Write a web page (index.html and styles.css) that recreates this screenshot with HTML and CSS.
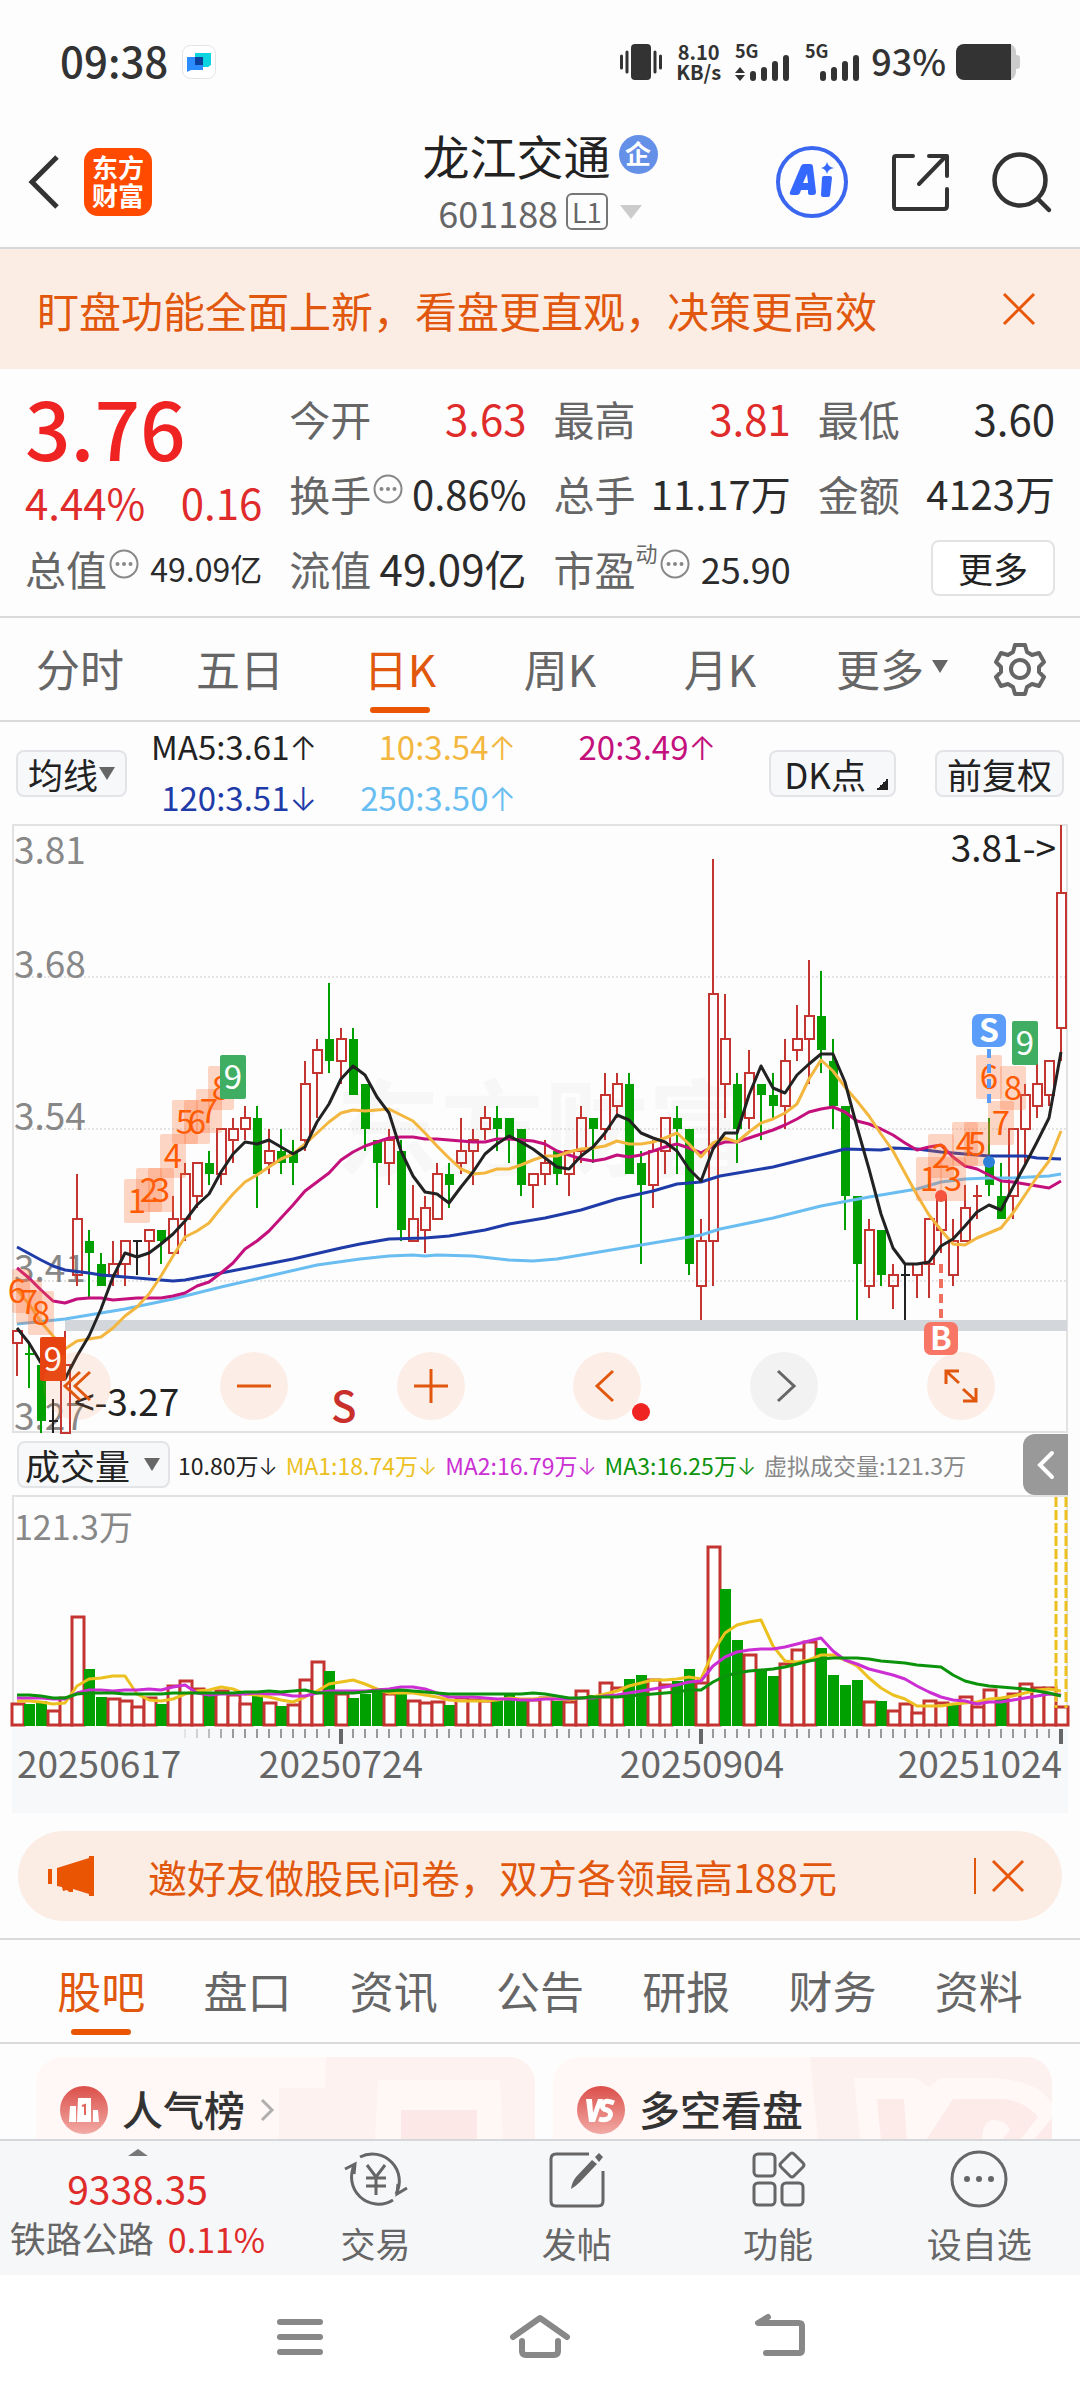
FILE: index.html
```html
<!DOCTYPE html>
<html lang="zh-CN">
<head>
<meta charset="utf-8">
<meta name="viewport" content="width=device-width, initial-scale=1">
<title>龙江交通 601188</title>
<link rel="stylesheet" href="styles.css">
</head>
<body>
<div class="status">
  <span class="status-time">09:38</span>
  <svg class="status-app" viewBox="0 0 34 34" width="34" height="34" aria-hidden="true"><rect x=".5" y=".5" width="33" height="33" rx="8" fill="#fff" stroke="#e2e4e8"/><path d="M13 8h16v12l-3 2H13z" fill="#0cd3e0"/><path d="M5 12h16v13H9l-4 2z" fill="#2a8cff"/><path d="M13 12h8v8h-8z" fill="#0a3f9c"/></svg>
  <span class="grow"></span>
  <svg viewBox="0 0 42 36" width="42" height="36" aria-hidden="true"><rect x="11" y="0" width="20" height="36" rx="4" fill="#333"/><path d="M1.500 12v12M7 8v20M35 8v20M40.500 12v12" stroke="#333" stroke-width="3" stroke-linecap="round"/></svg>
  <span class="status-speed"><span>8.10</span><span>KB/s</span></span>
  <svg viewBox="0 0 56 38" width="56" height="38" aria-hidden="true" class="signal"><text x="0" y="15">5G</text><path d="M5 24l5 6H0zM5 38l5-6H0z"/><rect x="15" y="28" width="6" height="10" rx="3"/><rect x="26" y="24" width="6" height="14" rx="3"/><rect x="37" y="18" width="6" height="20" rx="3"/><rect x="48" y="12" width="6" height="26" rx="3"/></svg>
  <svg viewBox="0 0 56 38" width="56" height="38" aria-hidden="true" class="signal"><text x="0" y="15">5G</text><rect x="15" y="28" width="6" height="10" rx="3"/><rect x="26" y="24" width="6" height="14" rx="3"/><rect x="37" y="18" width="6" height="20" rx="3"/><rect x="48" y="12" width="6" height="26" rx="3"/></svg>
  <span class="status-pct">93%</span>
  <svg viewBox="0 0 64 36" width="64" height="36" aria-hidden="true"><rect x="8" width="52" height="36" rx="8" fill="#ccc"/><rect x="58" y="11" width="6" height="14" rx="3" fill="#ccc"/><path d="M8 0h47v36H8a8 8 0 0 1-8-8V8a8 8 0 0 1 8-8z" fill="#333"/></svg>
</div>

<header class="header">
  <div class="header-left">
    <button class="plain" aria-label="返回"><svg viewBox="0 0 32 54" width="32" height="54"><path d="M29 2L4 27l25 25" fill="none" stroke="#333" stroke-width="5"/></svg></button>
    <a class="logo" href="#">东方<br>财富</a>
  </div>
  <div class="header-mid">
    <h1 class="name">龙江交通<span class="badge-corp">企</span></h1>
    <div class="code">601188<span class="level">L1</span><svg viewBox="0 0 22 14" width="22" height="14" aria-hidden="true"><path d="M0 0h22L11 14z" fill="#ccc"/></svg></div>
  </div>
  <div class="header-right">
    <button class="plain" aria-label="Ai"><svg viewBox="0 0 72 72" width="72" height="72"><circle cx="36" cy="36" r="34" fill="none" stroke="#3a66f0" stroke-width="4"/><path d="M25 20q1-2 3-2h6q3 0 3 3l3 25q0 3-3 3h-3q-2 0-2-2v-3h-7l-1 3q-1 2-3 2h-5q-3 0-2-3zM27 37h5l-1-9z" fill="#3568ff" fill-rule="evenodd"/><path d="M48 30h6q2 0 2 2l-2 17q0 2-2 2h-5q-2 0-2-2l1-17q0-2 2-2z" fill="#3568ff"/><path d="M51 16q1 5 7 6q-6 1-7 6q-1-5-6-6q5-1 6-6z" fill="#3568ff"/></svg></button>
    <button class="plain" aria-label="分享"><svg viewBox="0 0 58 58" width="58" height="58"><g fill="none" stroke="#333" stroke-width="4" stroke-linecap="round" stroke-linejoin="round"><path d="M22 3H5q-2 0-2 2v48q0 3 2 3h48q3 0 3-3V36"/><path d="M38 3h18v20M55 3L28 31"/></g></svg></button>
    <button class="plain" aria-label="搜索"><svg viewBox="0 0 60 60" width="60" height="60"><circle cx="28" cy="28" r="25.500" fill="none" stroke="#333" stroke-width="4.500"/><path d="M46 47l11 11" stroke="#333" stroke-width="4.500" stroke-linecap="round"/></svg></button>
  </div>
</header>

<div class="banner">
  <span>盯盘功能全面上新，看盘更直观，决策更高效</span>
  <button class="plain" aria-label="关闭"><svg viewBox="0 0 32 32" width="32" height="32"><path d="M1 1l30 30M31 1L1 31" stroke="#e8560a" stroke-width="3"/></svg></button>
</div>

<section class="quote">
  <div class="price"><strong>3.76</strong><span>4.44%</span><span>0.16</span></div>
  <div class="cell"><span>今开</span><b class="up">3.63</b></div>
  <div class="cell"><span>最高</span><b class="up">3.81</b></div>
  <div class="cell"><span>最低</span><b>3.60</b></div>
  <div class="cell"><span>换手</span><svg class="info" viewBox="0 0 30 30"><use href="#info"/></svg><b class="mid">0.86%</b></div>
  <div class="cell"><span>总手</span><b class="mid">11.17万</b></div>
  <div class="cell"><span>金额</span><b class="mid">4123万</b></div>
  <div class="cell"><span>总值</span><svg class="info" viewBox="0 0 30 30"><use href="#info"/></svg><b class="small">49.09亿</b></div>
  <div class="cell"><span>流值</span><b>49.09亿</b></div>
  <div class="cell"><span>市盈<sup>动</sup></span><svg class="info" viewBox="0 0 30 30"><use href="#info"/></svg><b class="pe">25.90</b></div>
  <div class="cell end"><button class="more">更多</button></div>
</section>
<svg class="defs" aria-hidden="true"><defs><g id="info"><circle cx="15" cy="15" r="13.500" fill="none" stroke="#888" stroke-width="2"/><g fill="#888"><circle cx="8.500" cy="15" r="2"/><circle cx="15" cy="15" r="2"/><circle cx="21.500" cy="15" r="2"/></g></g><linearGradient id="rose" x2="0" y2="1"><stop offset="0" stop-color="#db4f4a"/><stop offset="1" stop-color="#f2aaa5"/></linearGradient></defs></svg>

<nav class="periods">
  <button class="tab">分时</button>
  <button class="tab">五日</button>
  <button class="tab on">日K</button>
  <button class="tab">周K</button>
  <button class="tab">月K</button>
  <button class="tab"><span class="drop">更多</span></button>
  <button class="plain gear" aria-label="设置"><svg viewBox="0 0 54 54" width="54" height="54" fill="none" stroke="#666" stroke-width="4"><path d="M22 3h10l2 7 5 3 7-2 5 9-5 5v5l5 5-5 9-7-2-5 3-2 7H22l-2-7-5-3-7 2-5-9 5-5v-5l-5-5 5-9 7 2 5-3z" stroke-linejoin="round"/><circle cx="27" cy="27" r="9"/></svg></button>
</nav>

<div class="averages">
  <button class="chip">均线<i class="caret"></i></button>
  <div class="ma-list">
    <span class="ma5">MA5:3.61<i>↑</i></span><span class="ma10">10:3.54<i>↑</i></span><span class="ma20">20:3.49<i>↑</i></span>
    <span class="ma120">120:3.51<i>↓</i></span><span class="ma250">250:3.50<i>↑</i></span>
  </div>
  <button class="chip dk">DK点<i class="corner"></i></button>
  <button class="chip">前复权</button>
</div>

<section class="chart">
  <svg class="kline" viewBox="12 824 1056 610" role="img" aria-label="日K线图">
    <text class="watermark" x="336" y="1168">东方财富</text>
    <g class="grid"><path d="M12 977H1067M12 1129H1067M12 1281H1067"/></g>
    <rect class="frame" x="13" y="825" width="1054" height="607"/>
    <g class="scale"><text x="14" y="864">3.81</text><text x="14" y="978">3.68</text><text x="14" y="1130">3.54</text><text x="14" y="1282">3.41</text><text x="14" y="1430">3.27</text></g>
    <g id="candles"></g>
    <rect x="65" y="1320" width="1002" height="11" fill="#d3d6da"/>
    <g id="lines" class="lines">
      <polyline stroke="#1f3ba8" points="17,1247 41,1260 53,1266 65,1270 89,1273 101,1275 137,1278 173,1281 185,1280 221,1273 257,1266 293,1259 341,1248 360,1244 389,1239 425,1238 449,1236 485,1230 509,1224 545,1218 581,1210 617,1199 653,1191 677,1184 701,1182 720,1176 773,1167 821,1155 845,1149 881,1150 893,1148 917,1149 941,1152 965,1154 989,1156 1025,1156 1037,1158 1061,1159"/>
      <polyline stroke="#69bdf0" points="17,1324 65,1319 125,1309 173,1299 221,1287 269,1276 317,1265 360,1259 389,1256 413,1255 425,1256 437,1255 473,1256 509,1260 533,1261 557,1259 581,1255 617,1249 653,1243 701,1235 720,1229 773,1218 821,1206 869,1197 917,1189 941,1182 965,1179 989,1178 1013,1178 1049,1176 1061,1174"/>
    </g>
    <g id="counts" class="counts"></g>
    <g class="signals">
      <path d="M989 1049V1104" stroke="#5c9dfa"/><circle cx="989" cy="1162" r="6" fill="#2f80d8"/>
      <rect x="972" y="1014" width="34" height="33" rx="7" fill="#5c9dfa"/><text x="989" y="1042">S</text>
      <path d="M941 1264V1320" stroke="#f0705f"/><circle cx="941" cy="1196" r="6" fill="#f5533d"/>
      <rect x="924" y="1322" width="34" height="33" rx="7" fill="#f87666"/><text x="941" y="1350">B</text>
    </g>
    <g class="marks"><text x="74" y="1416">&lt;-3.27</text><text x="1056" y="862" text-anchor="end">3.81-&gt;</text></g>
    <text class="sell" x="331" y="1422">S</text>
  </svg>
  <div class="tools">
    <button aria-label="最早"><svg viewBox="0 0 34 34"><path d="M20 3L5 17l15 14M30 3L15 17l15 14"/></svg></button>
    <button aria-label="缩小"><svg viewBox="0 0 34 34"><path d="M0 17h34"/></svg></button>
    <button aria-label="放大"><svg viewBox="0 0 34 34"><path d="M0 17h34M17 0v34"/></svg></button>
    <button aria-label="向左" class="dot"><svg viewBox="0 0 34 34"><path d="M23 2L7 17l16 15"/></svg></button>
    <button aria-label="向右" class="off"><svg viewBox="0 0 34 34"><path d="M11 2l16 15-16 15"/></svg></button>
    <button aria-label="全屏"><svg viewBox="0 0 34 34"><path d="M2 15V2h13M2 2l13 12M32 19v13H19M32 32L19 20"/></svg></button>
  </div>
</section>

<div class="volume-head">
  <button class="chip wide">成交量<i class="caret"></i></button>
  <span class="v0">10.80万<i>↓</i></span><span class="v1">MA1:18.74万<i>↓</i></span><span class="v2">MA2:16.79万<i>↓</i></span><span class="v3">MA3:16.25万<i>↓</i></span><span class="v4">虚拟成交量:121.3万</span>
  <button class="fold" aria-label="展开"><svg viewBox="0 0 18 30" width="18" height="30"><path d="M15 3L3 15l12 12" fill="none" stroke="#fff" stroke-width="4" stroke-linecap="round"/></svg></button>
</div>

<section class="chart">
  <svg class="volume" viewBox="12 1495 1056 318" role="img" aria-label="成交量">
    <rect x="12" y="1728" width="1056" height="85" fill="#f7f8fa"/>
    <path class="frame" d="M13 1727V1496H1067V1727"/>
    <text x="14" y="1540" class="vmax">121.3万</text>
    <g id="bars"></g>
    <path d="M1056 1497V1708M1066 1497V1708" fill="none" stroke="#ecc11f" stroke-width="3" stroke-dasharray="10 3"/>
    <g id="vlines" class="lines"></g>
    <g id="ticks"></g>
    <g class="dates"><text x="17" y="1778">20250617</text><text x="341" y="1778" text-anchor="middle">20250724</text><text x="702" y="1778" text-anchor="middle">20250904</text><text x="1062" y="1778" text-anchor="end">20251024</text></g>
  </svg>
</section>

<div class="promo">
  <svg viewBox="0 0 46 40" width="46" height="40" aria-hidden="true"><path d="M0 13h4v15H0zM9 12L41 2V0h5v40h-5v-2l-16-5v3h-4l-2-2-4 1-1-4-5-1z" fill="#ea5504"/></svg>
  <span class="promo-text">邀好友做股民问卷，双方各领最高188元</span>
  <button class="plain" aria-label="关闭"><svg viewBox="0 0 32 32" width="32" height="32"><path d="M1 1l30 30M31 1L1 31" stroke="#e8560a" stroke-width="3"/></svg></button>
</div>

<nav class="sections">
  <button class="tab on">股吧</button><button class="tab">盘口</button><button class="tab">资讯</button><button class="tab">公告</button><button class="tab">研报</button><button class="tab">财务</button><button class="tab">资料</button>
</nav>

<div class="cards">
  <a class="card" href="#">
    <svg class="art" viewBox="0 0 260 83" aria-hidden="true"><path d="M51 0h209v83H4V31h46z" fill="#fdf2f0"/><path d="M103 23h122l3 60H100z" fill="#fff8f5"/><path d="M126 53h76v30h-76z" fill="#fce8e6"/></svg>
    <svg viewBox="0 0 48 48" width="48" height="48" aria-hidden="true"><circle cx="24" cy="24" r="24" fill="url(#rose)"/><path d="M10 20h6v16H9zM18 12h13v24H17zM33 24h5l1 12h-6z" fill="#fff"/><path d="M22 20l3-1v10" fill="none" stroke="#e0655f" stroke-width="2"/></svg>
    <span>人气榜</span>
    <svg viewBox="0 0 16 26" width="16" height="26" aria-hidden="true"><path d="M3 3l10 10L3 23" fill="none" stroke="#b0aeae" stroke-width="3"/></svg>
  </a>
  <a class="card" href="#">
    <svg class="art" viewBox="0 0 260 83" aria-hidden="true"><path d="M18 0h242v83H26z" fill="#fdf1ef"/><path d="M62 21h62l13 9 12-9h50q48 2 61 26v36H68z" fill="#fff8f6"/><path d="M85 42h27l3 41H89zM161 42h52q22 4 33 18l-18 23h14l18-22v22h-50l8-10q-4-11-18-10-10 3-10 20h-56z" fill="#fdebea"/></svg>
    <svg viewBox="0 0 48 48" width="48" height="48" aria-hidden="true"><circle cx="24" cy="24" r="24" fill="url(#rose)"/><path d="M9 13h6l1 14 5-14h5l-8 23h-6z" fill="#fff"/><path d="M37 17q-9-4-11 1t4 6q6 3 2 8-4 3-10 1" fill="none" stroke="#fff" stroke-width="5"/></svg>
    <span>多空看盘</span>
  </a>
</div>

<footer class="bottom">
  <a class="index" href="#"><i class="rise"></i><strong>9338.35</strong><span>铁路公路<b>0.11%</b></span></a>
  <a class="action" href="#"><svg viewBox="0 0 64 60" width="64" height="60"><path d="M16 8a27 27 0 0 1 36 37M49 51A27 27 0 0 1 11 15M1 20l10-5-1 10M63 39l-10 6 1-10M23 16l9 12 9-12M22 29h20M22 37h20M32 28v18"/></svg>交易</a>
  <a class="action" href="#"><svg viewBox="0 0 64 60" width="64" height="60"><path d="M44 5H11q-5 0-5 5v42q0 5 5 5h42q5 0 5-5V22"/><path d="M26 40q1-7 5-12l16-17 5 4-17 18q-4 4-9 7zM50 8l4-4 4 4-4 5z" fill="#666" stroke="none"/></svg>发帖</a>
  <a class="action" href="#"><svg viewBox="0 0 64 60" width="64" height="60"><rect x="8" y="5" width="21" height="22" rx="4"/><rect x="8" y="34" width="21" height="22" rx="4"/><rect x="36" y="34" width="21" height="22" rx="4"/><path d="M44 5q2-2 4 0l9 9q2 2 0 4l-9 9q-2 2-4 0l-9-9q-2-2 0-4z"/></svg>功能</a>
  <a class="action" href="#"><svg viewBox="0 0 64 60" width="64" height="60"><circle cx="32" cy="30" r="27"/><g fill="#666" stroke="none"><circle cx="20" cy="30" r="3"/><circle cx="32" cy="30" r="3"/><circle cx="44" cy="30" r="3"/></g></svg>设自选</a>
</footer>

<nav class="system">
  <button class="plain" aria-label="最近任务"><svg viewBox="0 0 60 46" width="60" height="46"><path d="M10 7h40M10 22h40M10 37h40"/></svg></button>
  <button class="plain" aria-label="主页"><svg viewBox="0 0 60 46" width="60" height="46"><path d="M3 22L30 3l27 19M12 26v10q0 4 4 4h28q4 0 4-4V26"/></svg></button>
  <button class="plain" aria-label="后退"><svg viewBox="0 0 60 46" width="60" height="46"><path d="M18 2L8 8h41q3 0 3 3v24q0 3-3 3H16"/></svg></button>
</nav>
<script src="chart.js"></script>
</body>
</html>
```
FILE: styles.css
```css
* { box-sizing: border-box; }
body {
  margin: 0;
  background: #fdfdfe;
  color: #222;
  font-family: "Noto Sans CJK SC", "Noto Sans", sans-serif;
}
button { font: inherit; color: inherit; cursor: pointer; }
a { color: inherit; text-decoration: none; }
i { font-style: normal; }
svg { display: block; flex: none; overflow: visible; }
.plain { display: grid; place-items: center; padding: 0; border: 0; background: none; }
.grow { flex: 1; }
.defs { width: 0; height: 0; position: absolute; }

/* status bar */
.status { display: flex; align-items: center; gap: 14px; height: 124px; padding: 0 60px; color: #333; }
.status-time { font-size: 42px; line-height: 44px; font-weight: 500; padding-bottom: 4px; }
.status-speed { display: grid; font-size: 20px; line-height: 20px; font-weight: 700; text-align: center; }
.status-pct { font-size: 36px; line-height: 40px; font-weight: 500; margin: 0 -4px; padding-bottom: 4px; }
.signal { fill: #333; font-size: 18px; font-weight: 700; }

/* header */
.header { display: grid; grid-template-columns: 1fr auto 1fr; align-items: center; height: 125px; padding: 0 28px 8px; border-bottom: 2px solid #d6d7da; }
.header-left { display: flex; align-items: center; gap: 24px; }
.logo { width: 68px; height: 68px; padding: 5px 0; border-radius: 14px; background: #ff4a00; color: #fff; font-size: 26px; line-height: 28px; font-weight: 700; text-align: center; }
.header-mid { display: grid; justify-items: center; }
.name { display: flex; align-items: center; gap: 8px; margin: 0; font-size: 47px; line-height: 60px; font-weight: 400; }
.badge-corp { width: 39px; height: 39px; border-radius: 50%; background: #6590e8; color: #fff; font-size: 26px; line-height: 36px; font-weight: 700; text-align: center; }
.code { display: flex; align-items: center; gap: 8px; color: #666; font-size: 36px; line-height: 54px; }
.level { padding: 0 4px; border: 2px solid #777; border-radius: 6px; font-size: 27px; line-height: 33px; }
.code svg { margin-left: 4px; }
.header-right { display: flex; align-items: center; justify-content: flex-end; gap: 43px; }

.banner { display: flex; align-items: center; justify-content: space-between; height: 120px; padding: 0 45px 0 37px; background: #fcede4; color: #e0570d; font-size: 42px; }

/* quote */
.quote { display: grid; grid-template-columns: repeat(4, 1fr); grid-auto-rows: 75px; column-gap: 27px; padding: 11px 25px; border-bottom: 2px solid #d9dadc; }
.price { grid-row: span 2; display: grid; grid-template-columns: 1fr auto; align-content: start; color: #e02b2b; font-size: 42px; line-height: 60px; }
.price strong { grid-column: span 2; color: #f02323; font-size: 80px; line-height: 92px; font-weight: 500; }
.cell { display: flex; align-items: center; color: #666; font-size: 41px; white-space: nowrap; }
.cell b { margin-left: auto; color: #2b2b2b; font-size: 42px; font-weight: 400; }
.cell .up { color: #e02b2b; }
.cell .mid { font-size: 40px; }
.cell .small { font-size: 32px; }
.cell .pe { font-size: 36px; }
.cell sup { font-size: 22px; line-height: 0; vertical-align: 24px; }
.info { width: 30px; height: 30px; margin: 0 0 8px 2px; }
.end { justify-content: flex-end; }
.more { width: 124px; height: 56px; padding: 0; border: 2px solid #e2e3e5; border-radius: 8px; background: #fff; color: #222; font-size: 35px; line-height: 50px; }

/* tabs */
.periods { display: grid; grid-template-columns: repeat(6, 4fr) 3fr; height: 104px; border-bottom: 2px solid #d9dadc; }
.sections { display: grid; grid-template-columns: repeat(7, 1fr); height: 106px; padding: 0 28px; border: solid #d9dadc; border-width: 2px 0; }
.tab { position: relative; padding: 0 0 2px; border: 0; background: none; color: #666; font-size: 44px; }
.tab.on { color: #e0570d; }
.tab.on::after { content: ""; position: absolute; left: calc(50% - 30px); bottom: 7px; width: 60px; height: 6px; border-radius: 3px; background: #ea5504; }
.drop { position: relative; }
.drop::after { content: ""; position: absolute; left: 100%; top: 24px; margin-left: 8px; border: solid transparent; border-width: 13px 8px 0; border-top-color: #666; }

/* moving averages */
.averages { display: flex; align-items: center; height: 102px; padding: 0 16px; }
.chip { position: relative; display: flex; align-items: center; height: 47px; padding: 0 10px; border: 2px solid #e2e4e7; border-radius: 8px; background: #f7f8fa; font-size: 35px; line-height: 43px; white-space: nowrap; }
.chip.dk { margin-right: 39px; padding: 0 28px 0 13px; }
.chip.wide { padding: 0 8px 0 6px; }
.caret { margin-left: 1px; border: solid transparent; border-width: 13px 8px 0; border-top-color: #666; }
.wide .caret { margin-left: 14px; }
.corner { position: absolute; right: 6px; bottom: 5px; width: 12px; height: 12px; background: linear-gradient(135deg, transparent 50%, #222 50%); }
.ma-list { display: grid; grid-template-columns: 190px 199px 200px; align-content: center; flex: 1; text-align: right; font-size: 33px; line-height: 49px; white-space: nowrap; }
.ma-list i, .volume-head i { font-family: Inter, sans-serif; font-weight: 300; }
.ma5 { color: #222; }
.ma10 { color: #f3b73f; }
.ma20 { color: #c4107c; }
.ma120 { color: #1f3ba8; }
.ma250 { color: #69bdf0; }

/* charts */
.chart { position: relative; margin: 0 12px; }
.chart > svg { width: 100%; height: auto; }
.frame { fill: none; stroke: #e2e2e2; stroke-width: 2; }
.grid { stroke: #e4e4e4; stroke-width: 2; stroke-dasharray: 2 2; }
.scale, .marks { font-size: 37px; fill: #888; }
.marks { fill: #222; }
.watermark { font-size: 104px; font-weight: 700; fill: #f7f7f7; }
.lines { fill: none; stroke-width: 3; stroke-linejoin: round; }
.counts { font-size: 33px; text-anchor: middle; fill: #ff5a00; }
.signals { font-size: 32px; font-weight: 700; text-anchor: middle; fill: #fff; stroke-width: 4; }
.signals path { stroke-dasharray: 9 6; }
.sell { font-size: 42px; font-weight: 500; fill: #c9302c; }
.vmax { font-size: 34px; fill: #888; }
.dates { font-size: 37px; fill: #666; }
.tools { position: absolute; left: 31px; right: 73px; bottom: 14px; display: flex; justify-content: space-between; }
.tools button { position: relative; display: grid; place-items: center; width: 68px; height: 68px; padding: 0; border: 0; border-radius: 50%; background: rgba(250, 130, 60, .12); }
.tools svg { width: 34px; height: 34px; fill: none; stroke: #e0570d; stroke-width: 3; }
.tools .off { background: #f2f2f2; }
.tools .off svg { stroke: #666; }
.dot::after { content: ""; position: absolute; right: -9px; bottom: -1px; width: 18px; height: 18px; border-radius: 50%; background: #f02323; }

.volume-head { display: flex; align-items: center; height: 61px; margin: 0 12px; padding-left: 5px; font-size: 23px; white-space: nowrap; }
.volume-head span { margin-left: 8px; }
.v0 { color: #222; }
.v1 { color: #ecc11f; }
.v2 { color: #cb2fd3; }
.v3 { color: #0c930c; }
.v4 { color: #888; }
.fold { display: grid; place-items: center; width: 45px; height: 61px; margin-left: auto; padding: 0; border: 0; border-radius: 12px 0 0 12px; background: #999; }

/* promo */
.promo { display: flex; align-items: center; height: 90px; margin: 18px 18px 17px; padding: 0 38px 0 30px; border-radius: 45px; background: #fcede4; color: #e0570d; font-size: 39px; }
.promo-text { flex: 1; margin-left: 54px; }
.promo button { height: 36px; padding-left: 16px; border-left: 2px solid #e0570d; }

/* cards */
.cards { display: grid; grid-template-columns: 1fr 1fr; gap: 18px; padding: 13px 28px 0 36px; }
.card { position: relative; display: flex; align-items: center; gap: 14px; height: 82px; padding: 24px 24px 0; overflow: hidden; border-radius: 26px 26px 0 0; background: #fff8f6; color: #333; font-size: 41px; line-height: 56px; font-weight: 500; }
.card > * { position: relative; }
.card span { margin-top: -4px; }
.card .art { position: absolute; right: 0; top: 0; width: 260px; height: 83px; }

/* bottom bar */
.bottom { display: grid; grid-template-columns: 275px repeat(4, 1fr); height: 136px; border-top: 2px solid #d6d7da; background: #f6f7f9; color: #666; }
.index { display: grid; justify-items: center; align-content: start; padding-top: 8px; }
.rise { border: solid transparent; border-width: 0 10px 7px; border-bottom-color: #777; }
.index strong { color: #e02b2b; font-size: 39px; line-height: 64px; font-weight: 400; }
.index span { font-size: 36px; line-height: 34px; white-space: nowrap; }
.index b { margin-left: 14px; color: #e02b2b; font-size: 34px; font-weight: 400; }
.action { display: grid; justify-items: center; align-content: start; padding-top: 8px; font-size: 35px; line-height: 68px; }
.action svg { fill: none; stroke: #666; stroke-width: 3; }

.system { display: grid; grid-template-columns: repeat(3, 1fr); height: 126px; padding: 0 180px; background: #fff; }
.system svg { fill: none; stroke: #888; stroke-width: 6; stroke-linecap: round; stroke-linejoin: round; }
```
FILE: chart.js
```js
// One entry per day: colour, high, body top, body bottom, low (in cents).
const days = `r336,336,335,332 g335,334,334,331 g333,333,328,327 k330,328,328,327 r336,333,327,327 r350,346,341,340
g345,344,343,339 g343,342,340,340 r344,342,341,340 r344,344,342,340 k344,344,344,341 r345,345,344,341 g345,345,344,342
r348,346,343,343 r351,350,346,344 r351,351,348,347 g352,351,350,349 r354,354,350,349 r355,354,353,351 r356,355,354,353
g356,355,350,347 r354,352,351,350 g354,352,351,350 g353,352,351,349 r360,358,353,352 r362,361,359,355 g367,362,360,359
r363,362,360,358 g363,362,357,357 g358,358,354,352 g353,353,351,347 r354,353,351,349 g353,352,345,344 r349,346,344,344
r348,347,345,343 r351,350,346,346 g351,350,349,347 r355,352,351,350 r354,353,352,349 r356,355,354,353 g356,355,354,352
g355,355,353,351 g354,354,349,348 r350,350,349,347 r353,351,350,349 g352,352,350,349 r352,352,350,348 r356,355,352,351
g355,355,354,351 r359,357,354,353 r359,358,356,355 g359,358,350,350 g352,351,349,342 r353,352,349,347 r355,355,352,350
g356,355,354,350 g354,354,342,341 r346,344,340,337 r378,366,344,340 r366,362,358,355 g359,358,354,351 r361,359,355,354
g358,358,357,353 g359,357,356,355 r362,360,356,354 r365,362,361,360 r369,364,362,358 g368,364,361,359 g362,360,356,354
g356,356,348,345 g348,348,342,337 r346,345,340,339 g345,345,341,340 r342,341,340,338 k342,341,341,337 r342,342,341,339
r346,346,342,339 r348,348,345,343 r346,344,341,340 r349,347,344,344 r349,348,348,346 g355,351,349,348 g351,348,346,346
r354,354,348,346 r358,357,354,351 r360,358,356,355 r360,360,357,356 r381,375,363,360`.split(/\s+/).map(s => [s[0], ...s.slice(1).split(',').map(Number)]);

const volumes = `r23 g22 g25 r16 r29 r112 g58 g29 r28 r26 r20 r29 g22 r42 r47 r39 g32 r37 r32 r23 g31 r24 g20 r22 r48 r66 g56 r33
g28 g32 g39 r33 g37 r26 r24 r25 g21 r29 r27 r26 g28 g32 g26 r27 r29 g25 r25 r37 g31 r45 r40 g48 g52 r48 r43 g46 g58 r45 r183
g139 g87 r73 g57 g51 r64 r78 r86 g79 g52 g42 g47 r25 g25 r16 r23 r14 r26 r24 g23 r30 r20 r38 g29 r34 r44 r40 r40 r20`
  .split(/\s+/).map(s => [s[0], Number(s.slice(1))]);

const colors = { r: '#c43531', g: '#00a000', k: '#222' };
const x = i => 17 + 12 * i;
const y = p => Math.round(825 + (381 - p) * 11.25);
const add = (id, html) => document.getElementById(id).insertAdjacentHTML('beforeend', html);

days.forEach(([c, hi, top, bottom, lo], i) => {
  const col = colors[c], cx = x(i), a = y(top), b = y(bottom);
  const wick = c === 'r' && top !== bottom ? `M${cx} ${y(hi)}V${a}M${cx} ${b}V${y(lo)}` : `M${cx} ${y(hi)}V${y(lo)}`;
  let s = `<path d="${wick}" stroke="${col}" stroke-width="2"/>`;
  if (top === bottom) s += `<path d="M${cx - 4} ${a}h9" stroke="${col}" stroke-width="2"/>`;
  else if (c === 'g') s += `<rect x="${cx - 4}" y="${a}" width="9" height="${b - a}" fill="${col}"/>`;
  else s += `<rect x="${cx - 4}" y="${a}" width="9" height="${b - a}" fill="none" stroke="${col}" stroke-width="2"/>`;
  add('candles', s);
});

// Moving average; `head` holds the values for days whose window starts before the first day drawn.
const average = (values, n, head) => values.map((_, i) =>
  i < n - 1 ? head[i] : values.slice(i - n + 1, i + 1).reduce((t, v) => t + v, 0) / n);
const line = (values, toY, color) =>
  `<polyline stroke="${color}" points="${values.map((v, i) => x(i) + ',' + toY(v)).join(' ')}"/>`;

const closes = days.map(([c, , top, bottom]) => (c === 'g' ? bottom : top));
const head20 = [341.6, 340.7, 339.7, 338.7, 338.5, 338.9, 339, 339, 338.8, 338.9, 339, 339, 339, 339.1, 339.4, 340, 340.4, 341.2, 342.1];
add('lines', line(average(closes, 20, head20), y, '#c4107c')
  + line(average(closes, 10, [339.7, 338.4, 336.8, 335.6, 334.4, 335.1, 335.3, 335.5, 336.3]), y, '#f3b73f')
  + line(average(closes, 5, [336.3, 335, 333.2, 331.9]), y, '#222'));

const vy = v => Math.round(1726 - v * 0.985);
volumes.forEach(([c, v], i) => {
  const top = vy(v), h = 1726 - top, left = x(i) - 5;
  add('bars', c === 'g'
    ? `<rect x="${left}" y="${top}" width="11" height="${h}" fill="${colors.g}"/>`
    : `<rect x="${left}" y="${top + 1}" width="12" height="${h - 2}" fill="#fff" stroke="${colors.r}" stroke-width="3"/>`);
});
const amounts = volumes.map(v => v[1]);
add('vlines', line(average(amounts, 5, [25, 25, 24, 22]), vy, '#ecc11f')
  + line(average(amounts, 10, [28, 28, 28, 27, 27, 34, 37, 37, 36]), vy, '#cb2fd3')
  + line(average(amounts, 20, [31, 31, 30, 28, 28, 32, 33, 33, 33, 32, 32, 32, 32, 33, 34, 34, 34, 34, 34]), vy, '#0c930c'));

for (let i = 14; i < 88; i++) {
  const major = i === 27 || i === 57 || i === 87;
  add('ticks', `<path d="M${x(i)} 1729V${major ? 1744 : 1738}" stroke="${major ? '#666' : '#999'}" stroke-width="${major ? 4 : 2}" opacity="${Math.min(1, (i - 13) / 5)}"/>`);
}

// Run counts: digit, day index, top of its box, fill of a finished run
[[6, 0, 1269], [7, 1, 1280], [8, 2, 1291], [9, 3, 1337, '#e64310'],
 [1, 10, 1179], [2, 11, 1168], [3, 12, 1168], [4, 13, 1134], [5, 14, 1100], [6, 15, 1100], [7, 16, 1089], [8, 17, 1066], [9, 18, 1055, '#3fae62'],
 [1, 76, 1157], [2, 77, 1134], [3, 78, 1157], [4, 79, 1122], [5, 80, 1122], [6, 81, 1055], [7, 82, 1101], [8, 83, 1066], [9, 84, 1021, '#3fae62']
].forEach(([n, i, top, solid]) => {
  const left = Math.max(12, x(i) - 13);
  add('counts', `<rect x="${left}" y="${top}" width="${x(i) + 13 - left}" height="44" rx="2" fill="${solid || 'rgba(255,110,50,.28)'}"/>`
    + `<text x="${x(i)}" y="${top + 34}"${solid ? ' fill="#fff"' : ''}>${n}</text>`);
});
```
